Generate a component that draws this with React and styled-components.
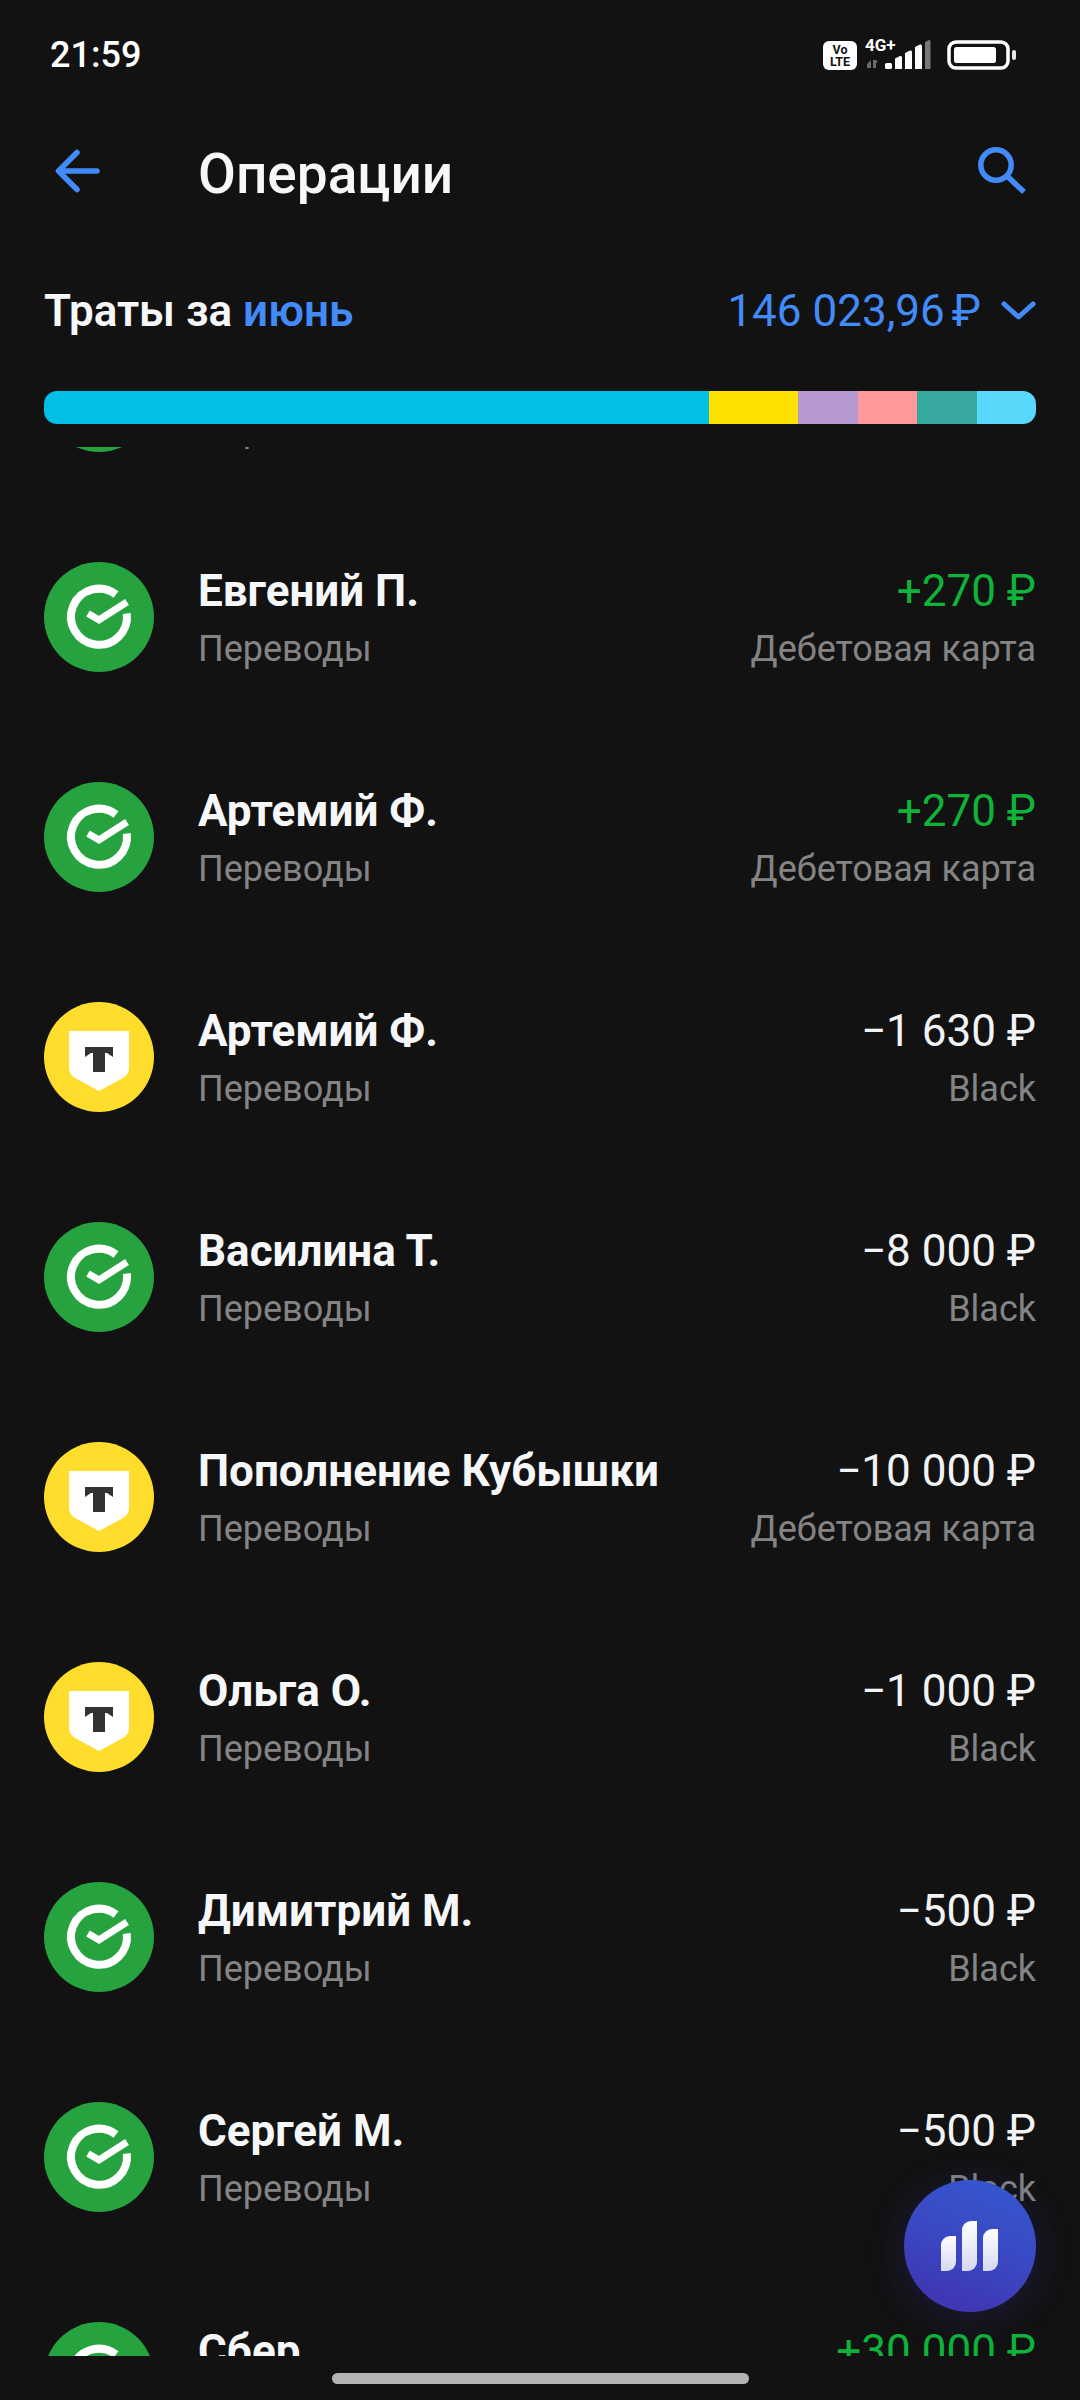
import React from "react";
import styled, { createGlobalStyle } from "styled-components";

const Global = createGlobalStyle`
  html, body { margin: 0; padding: 0; background: #121212; }
  * { box-sizing: border-box; }
`;

const Page = styled.div`
  position: relative;
  width: 1080px;
  height: 2400px;
  background: #121212;
  font-family: Roboto, "Noto Sans", sans-serif;
  color: #f6f7f8;
  display: flex;
  flex-direction: column;
  overflow: hidden;
`;

const StatusBar = styled.div`
  height: 110px;
  padding: 0 63px 0 50px;
  display: flex;
  align-items: center;
  justify-content: space-between;
`;
const Time = styled.span`
  font-size: 36px;
  font-weight: 500;
  color: #fff;
`;
const StatusIcons = styled.div`
  display: flex;
  align-items: center;
  gap: 8px;
`;
const Volte = styled.div`
  width: 34px;
  height: 29px;
  background: #fff;
  border-radius: 6px;
  color: #121212;
  font-size: 12.5px;
  line-height: 12px;
  font-weight: 700;
  text-align: center;
  padding-top: 3px;
`;
const Network = styled.div`
  position: relative;
  width: 68px;
  height: 32px;
`;
const NetLabel = styled.span`
  position: absolute;
  left: 0;
  top: -4px;
  font-size: 17px;
  line-height: 20px;
  font-weight: 700;
  color: #fff;
`;
const Battery = styled.div`
  margin-left: 6px;
  display: flex;
`;

const Header = styled.div`
  height: 120px;
  padding: 0 54px 0 55px;
  display: flex;
  align-items: center;
`;
const BackSlot = styled.div`
  width: 144px;
  display: flex;
`;
const Title = styled.h1`
  flex: 1;
  margin: 0;
  font-size: 55px;
  font-weight: 500;
  color: #f6f7f8;
  position: relative;
  top: 4px;
  left: -1px;
`;

const Summary = styled.div`
  margin-top: 32px;
  height: 98px;
  padding: 0 44px;
  display: flex;
  align-items: center;
  justify-content: space-between;
`;
const SummaryLabel = styled.div`
  font-size: 44px;
  font-weight: 600;
`;
const Accent = styled.span`
  color: #428bf9;
`;
const SummaryValue = styled.div`
  display: flex;
  align-items: center;
  gap: 20px;
  font-size: 44px;
  color: #428bf9;
`;
const Ruble = styled.span`
  margin-left: 7px;
`;

const SpendBar = styled.div`
  margin: 31px 44px 0;
  height: 33px;
  border-radius: 13px;
  display: flex;
  overflow: hidden;
`;
const Segment = styled.div`
  width: ${(p) => p.$w}px;
  background: ${(p) => p.$c};
`;

const ListClip = styled.div`
  margin-top: 23px;
  height: 1909px;
  overflow: hidden;
`;
const List = styled.div`
  margin-top: -160px;
  padding: 0 44px;
`;
const Row = styled.div`
  height: 220px;
  display: flex;
  align-items: center;
`;
const Avatar = styled.div`
  width: 110px;
  height: 110px;
  flex: none;
  border-radius: 50%;
  background: ${(p) => p.$bg};
  margin-right: 44px;
`;
const Column = styled.div`
  display: flex;
  flex-direction: column;
  gap: 10px;
  padding-top: 2px;
  align-items: ${(p) => (p.$end ? "flex-end" : "flex-start")};
  margin-left: ${(p) => (p.$end ? "auto" : "0")};
`;
const Name = styled.div`
  font-size: 44px;
  line-height: 52px;
  font-weight: 700;
  color: #f6f7f8;
`;
const Amount = styled.div`
  font-size: 44px;
  line-height: 52px;
  color: ${(p) => (p.$plus ? "#0fb33a" : "#f2f3f4")};
`;
const Sub = styled.div`
  font-size: 36px;
  line-height: 44px;
  color: #848484;
`;

const Fab = styled.div`
  position: absolute;
  left: 904px;
  top: 2180px;
  width: 132px;
  height: 132px;
  border-radius: 50%;
  background: linear-gradient(200deg, #3459d0 0%, #3a48c2 50%, #3f37b4 85%);
  box-shadow: 0 6px 40px rgba(50, 50, 170, 0.28);
  display: flex;
  align-items: center;
  justify-content: center;
`;
const HomeBar = styled.div`
  position: absolute;
  left: 332px;
  top: 2373px;
  width: 417px;
  height: 11px;
  border-radius: 6px;
  background: #b4b4b4;
`;

const SberIcon = () => (
  <svg width="110" height="110" viewBox="-55 -55 110 110">
    <path
      d="M17 -22.500 A28 28 0 1 0 27.800 -3.500"
      fill="none"
      stroke="#fff"
      strokeWidth="8"
    />
    <path d="M-11 -3.500 L0 3 L28 -15" fill="none" stroke="#fff" strokeWidth="7" />
  </svg>
);

const BankIcon = () => (
  <svg width="110" height="110" viewBox="-55 -55 110 110">
    <path d="M-30 -26 H30 V10 C30 16 28 18 24 21 L0 34 L-24 21 C-28 18 -30 16 -30 10 Z" fill="#fff" />
    <path d="M-14 -10 H14 V0 L8 -4 H6 V15 H-6 V-4 H-8 L-14 0 Z" fill="#333" />
  </svg>
);

const rows = [
  { name: "Скрытый", amount: "", sub: "", type: "s" },
  { name: "Евгений П.", amount: "+270 ₽", sub: "Дебетовая карта", type: "s", plus: true },
  { name: "Артемий Ф.", amount: "+270 ₽", sub: "Дебетовая карта", type: "s", plus: true },
  { name: "Артемий Ф.", amount: "−1 630 ₽", sub: "Black", type: "t" },
  { name: "Василина Т.", amount: "−8 000 ₽", sub: "Black", type: "s" },
  { name: "Пополнение Кубышки", amount: "−10 000 ₽", sub: "Дебетовая карта", type: "t" },
  { name: "Ольга О.", amount: "−1 000 ₽", sub: "Black", type: "t" },
  { name: "Димитрий М.", amount: "−500 ₽", sub: "Black", type: "s" },
  { name: "Сергей М.", amount: "−500 ₽", sub: "Black", type: "s" },
  { name: "Сбер", amount: "+30 000 ₽", sub: "Дебетовая карта", type: "s", plus: true },
];

const segments = [
  [665, "#02bfe4"],
  [89, "#ffe100"],
  [60, "#b598cf"],
  [59, "#ff9999"],
  [60, "#36a89d"],
  [59, "#5ad8fb"],
];

export default function App() {
  return (
    <Page>
      <Global />
      <StatusBar>
        <Time>21:59</Time>
        <StatusIcons>
          <Volte>Vo<br />LTE</Volte>
          <Network>
            <NetLabel>4G+</NetLabel>
            <svg width="68" height="32" viewBox="0 0 68 32">
              <path d="M2 25l4-4v8H2zM8 21h3l2 2-2 1v5H8z" fill="#6a6a6a" />
              <rect x="20" y="24" width="7" height="6" rx="1.5" fill="#fff" />
              <path d="M30 19.5l5-2.5q2-.5 2 1.5V30h-7z" fill="#fff" />
              <path d="M40 14l5-2.5q2-.5 2 1.5V30h-7z" fill="#fff" />
              <path d="M50 8l5-2.5q2-.5 2 1.5V30h-7z" fill="#fff" />
              <path d="M60 3l4-2q1.500-.5 1.500 1.500V30H60z" fill="#777" />
            </svg>
          </Network>
          <Battery>
            <svg width="70" height="30" viewBox="0 0 70 30">
              <rect x="2" y="2" width="59" height="26" rx="7" fill="none" stroke="#fff" strokeWidth="3.500" />
              <rect x="7" y="7" width="42" height="16" rx="2.500" fill="#fff" />
              <rect x="65" y="10" width="4" height="10" rx="2" fill="#e8e8e8" />
            </svg>
          </Battery>
        </StatusIcons>
      </StatusBar>

      <Header>
        <BackSlot>
          <svg width="46" height="48" viewBox="0 0 46 48">
            <path d="M42 25H4M22 6.500L3.500 25 22 43.500" fill="none" stroke="#428bf9" strokeWidth="5.500" strokeLinecap="round" strokeLinejoin="round" />
          </svg>
        </BackSlot>
        <Title>Операции</Title>
        <svg width="48" height="47" viewBox="0 0 48 47">
          <circle cx="18" cy="18" r="15.200" fill="none" stroke="#428bf9" strokeWidth="5.500" />
          <path d="M29 29L46 45" fill="none" stroke="#428bf9" strokeWidth="5.500" />
        </svg>
      </Header>

      <Summary>
        <SummaryLabel>
          Траты за <Accent>июнь</Accent>
        </SummaryLabel>
        <SummaryValue>
          <span>146 023,96<Ruble>₽</Ruble></span>
          <svg width="35" height="22" viewBox="0 0 35 22">
            <path d="M3 4l14.500 13L32 4" fill="none" stroke="#428bf9" strokeWidth="5" strokeLinecap="round" strokeLinejoin="round" />
          </svg>
        </SummaryValue>
      </Summary>

      <SpendBar>
        {segments.map(([w, c]) => (
          <Segment key={c} $w={w} $c={c} />
        ))}
      </SpendBar>

      <ListClip>
        <List>
          {rows.map((r, i) => (
            <Row key={i}>
              <Avatar $bg={r.type === "s" ? "#26a33e" : "#ffdd2d"}>
                {r.type === "s" ? <SberIcon /> : <BankIcon />}
              </Avatar>
              <Column>
                <Name>{r.name}</Name>
                <Sub>Переводы</Sub>
              </Column>
              <Column $end>
                <Amount $plus={r.plus}>{r.amount}</Amount>
                <Sub>{r.sub}</Sub>
              </Column>
            </Row>
          ))}
        </List>
      </ListClip>

      <Fab>
        <svg width="58" height="50" viewBox="0 0 58 50">
          <defs>
            <linearGradient id="fabBars" x1="0" y1="0" x2="0" y2="1">
              <stop offset="0" stopColor="#ffffff" />
              <stop offset="1" stopColor="#d5d9f2" />
            </linearGradient>
          </defs>
          <path d="M0 50V24a9 9 0 0 1 9-9h6v26a9 9 0 0 1-9 9z" fill="url(#fabBars)" />
          <path d="M21 50V9a9 9 0 0 1 9-9h6v41a9 9 0 0 1-9 9z" fill="url(#fabBars)" />
          <path d="M42 50V17a9 9 0 0 1 9-9h6v33a9 9 0 0 1-9 9z" fill="url(#fabBars)" />
        </svg>
      </Fab>
      <HomeBar />
    </Page>
  );
}
